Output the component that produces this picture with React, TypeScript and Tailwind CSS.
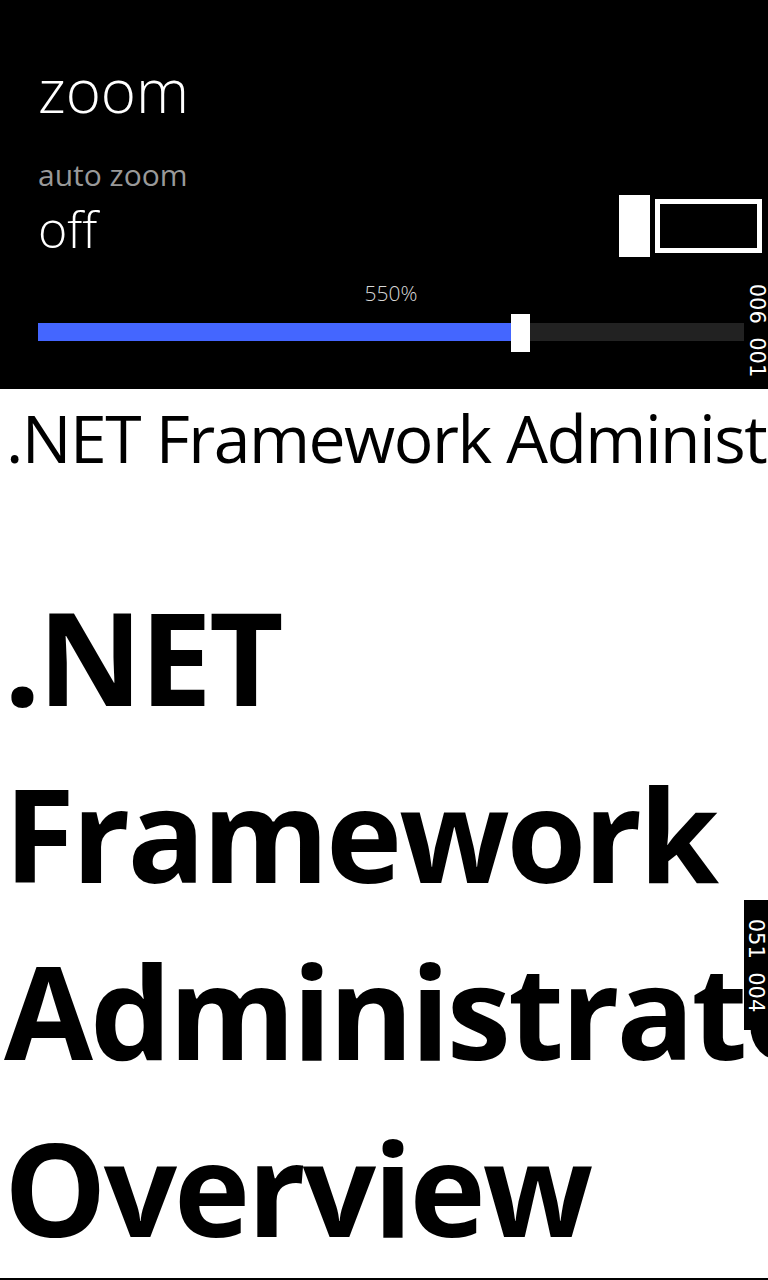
import React from 'react'

const segoe = { fontFamily: '"Open Sans", "Noto Sans", sans-serif' }

function Toggle() {
  return (
    <div className="flex items-center gap-[5px]">
      <div className="h-[62px] w-[31px] bg-white" />
      <div className="h-[54px] w-[107px] border-[5px] border-white" />
    </div>
  )
}

// fill width in px along a 706px track
function ZoomSlider({ value, fill }: { value: number; fill: number }) {
  return (
    <div className="mt-[24px] w-[706px]">
      <div className="text-center text-[21px] leading-[24px] font-light text-[#d8d8d8]">{value}%</div>
      <div className="relative mt-[18px] h-[18px] w-[706px] bg-[#222222]">
        <div className="h-full bg-[#4466ff]" style={{ width: fill }} />
        <div className="absolute top-[-9px] h-[38px] w-[19px] bg-white" style={{ left: fill }} />
      </div>
    </div>
  )
}

function SideLabel({ text, className }: { text: string; className: string }) {
  return (
    <div className={`absolute flex items-center justify-center ${className}`}>
      <span
        className="whitespace-pre text-[21px] leading-none rotate-90"
        style={{ fontFamily: '"DejaVu Sans", sans-serif' }}
      >
        {text}
      </span>
    </div>
  )
}

export default function App() {
  return (
    <div className="relative h-[1280px] w-[768px] overflow-hidden bg-white" style={segoe}>
      <div className="h-[389px] bg-black pl-[38px] pt-[58px] text-white">
        <div className="text-[60px] leading-[64px] font-light">zoom</div>
        <div className="mt-[36px] flex items-end justify-between pr-[6px]">
          <div>
            <div className="text-[30px] leading-[34px] text-[#999999]">auto zoom</div>
            <div className="mt-[9px] text-[50px] leading-[56px] font-light">off</div>
          </div>
          <Toggle />
        </div>
        <ZoomSlider value={550} fill={473} />
      </div>

      <div className="whitespace-nowrap pl-[6px] pt-[8px] text-[66px] leading-[80px] tracking-[-1.5px] text-black">
        .NET Framework Administration Overview
      </div>

      <div className="mt-[91px] pl-[4px] text-[129px] leading-[177px] font-bold tracking-[-3px] text-black">
        <div className="whitespace-nowrap">.NET</div>
        <div className="whitespace-nowrap">Framework</div>
        <div className="whitespace-nowrap">Administrator</div>
        <div className="whitespace-nowrap">Overview</div>
      </div>

      <div className="absolute bottom-0 left-0 h-[2px] w-full bg-black" />

      <SideLabel text="006  001" className="left-[745px] top-[282px] h-[96px] w-[23px] text-white" />
      <SideLabel text="051  004" className="left-[744px] top-[900px] h-[130px] w-[24px] bg-black text-white" />
    </div>
  )
}
